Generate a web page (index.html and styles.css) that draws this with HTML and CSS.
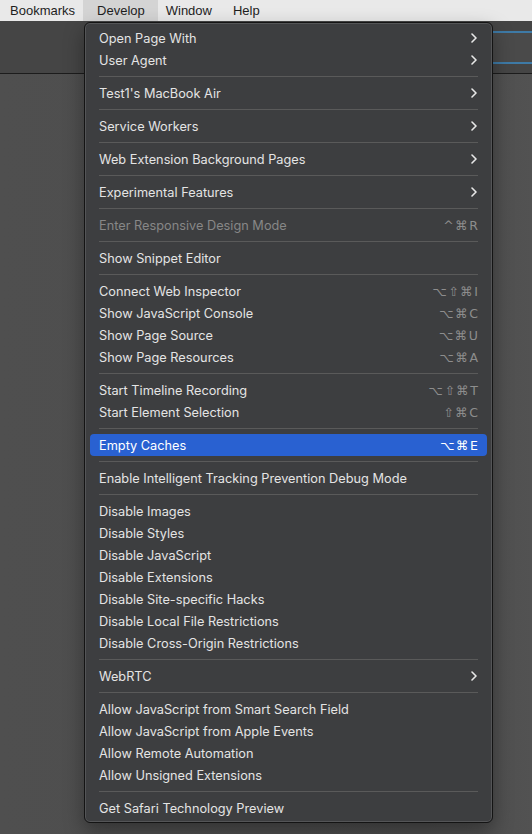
FILE: index.html
```html
<!DOCTYPE html>
<html lang="en">

<head>
  <meta charset="UTF-8" />
  <title>Develop menu</title>
  <link rel="stylesheet" href="styles.css">
</head>

<body>

  <div class="menubar">
    <span class="menubar-item">Bookmarks</span>
    <span class="menubar-item open">Develop</span>
    <span class="menubar-item">Window</span>
    <span class="menubar-item">Help</span>
  </div>

  <div class="window">
    <div class="toolbar">
      <div class="tab-strip"></div>
    </div>
    <div class="content"></div>

    <!-- Develop dropdown -->
    <div class="dropdown">
      <div class="item"><span class="label">Open Page With</span><svg class="chevron" viewBox="0 0 6 10"><polyline points="1,1 5,5 1,9" /></svg></div>
      <div class="item"><span class="label">User Agent</span><svg class="chevron" viewBox="0 0 6 10"><polyline points="1,1 5,5 1,9" /></svg></div>
      <div class="separator"></div>
      <div class="item"><span class="label">Test1's MacBook Air</span><svg class="chevron" viewBox="0 0 6 10"><polyline points="1,1 5,5 1,9" /></svg></div>
      <div class="separator"></div>
      <div class="item"><span class="label">Service Workers</span><svg class="chevron" viewBox="0 0 6 10"><polyline points="1,1 5,5 1,9" /></svg></div>
      <div class="separator"></div>
      <div class="item"><span class="label">Web Extension Background Pages</span><svg class="chevron" viewBox="0 0 6 10"><polyline points="1,1 5,5 1,9" /></svg></div>
      <div class="separator"></div>
      <div class="item"><span class="label">Experimental Features</span><svg class="chevron" viewBox="0 0 6 10"><polyline points="1,1 5,5 1,9" /></svg></div>
      <div class="separator"></div>
      <div class="item disabled"><span class="label">Enter Responsive Design Mode</span><span class="shortcut">^⌘R</span></div>
      <div class="separator"></div>
      <div class="item"><span class="label">Show Snippet Editor</span></div>
      <div class="separator"></div>
      <div class="item"><span class="label">Connect Web Inspector</span><span class="shortcut">⌥⇧⌘I</span></div>
      <div class="item"><span class="label">Show JavaScript Console</span><span class="shortcut">⌥⌘C</span></div>
      <div class="item"><span class="label">Show Page Source</span><span class="shortcut">⌥⌘U</span></div>
      <div class="item"><span class="label">Show Page Resources</span><span class="shortcut">⌥⌘A</span></div>
      <div class="separator"></div>
      <div class="item"><span class="label">Start Timeline Recording</span><span class="shortcut">⌥⇧⌘T</span></div>
      <div class="item"><span class="label">Start Element Selection</span><span class="shortcut">⇧⌘C</span></div>
      <div class="separator"></div>
      <div class="item selected"><span class="label">Empty Caches</span><span class="shortcut">⌥⌘E</span></div>
      <div class="separator"></div>
      <div class="item"><span class="label">Enable Intelligent Tracking Prevention Debug Mode</span></div>
      <div class="separator"></div>
      <div class="item"><span class="label">Disable Images</span></div>
      <div class="item"><span class="label">Disable Styles</span></div>
      <div class="item"><span class="label">Disable JavaScript</span></div>
      <div class="item"><span class="label">Disable Extensions</span></div>
      <div class="item"><span class="label">Disable Site-specific Hacks</span></div>
      <div class="item"><span class="label">Disable Local File Restrictions</span></div>
      <div class="item"><span class="label">Disable Cross-Origin Restrictions</span></div>
      <div class="separator"></div>
      <div class="item"><span class="label">WebRTC</span><svg class="chevron" viewBox="0 0 6 10"><polyline points="1,1 5,5 1,9" /></svg></div>
      <div class="separator"></div>
      <div class="item"><span class="label">Allow JavaScript from Smart Search Field</span></div>
      <div class="item"><span class="label">Allow JavaScript from Apple Events</span></div>
      <div class="item"><span class="label">Allow Remote Automation</span></div>
      <div class="item"><span class="label">Allow Unsigned Extensions</span></div>
      <div class="separator"></div>
      <div class="item"><span class="label">Get Safari Technology Preview</span></div>
    </div>
  </div>

</body>

</html>
```

FILE: styles.css
```css
body {
  margin: 0;
  height: 834px;
  overflow: hidden;
  background: #4e4e4e;
  font-family: Inter, "Liberation Sans", "DejaVu Sans", sans-serif;
}

/* top menu bar */
.menubar {
  display: flex;
  height: 21px;
  align-items: center;
  background: #e9e9e9;
  color: #1e1e1e;
  font-family: "Liberation Sans", Arial, sans-serif;
  font-size: 13px;
}

.menubar-item {
  height: 21px;
  line-height: 21px;
  padding: 0 13px 0 8px;
}

.menubar-item:first-child {
  padding: 0 8px 0 10px;
}

.menubar-item.open {
  background: #d4d4d4;
  padding: 0 13px 0 14px;
}

/* window behind the menu */
.window {
  position: relative;
}

.toolbar {
  display: flex;
  justify-content: flex-end;
  height: 52px;
  background: #454545;
  border-bottom: 1px solid #1c1c1c;
}

.tab-strip {
  width: 120px;
  height: 29px;
  margin-top: 10px;
  border-top: 2px solid #3e7aa6;
  border-bottom: 2px solid #3e7aa6;
  background: #4a4a4a;
}

.content {
  height: 760px;
  background: linear-gradient(to right, #4f4f4f, #4c4c4c 80%, #525252);
}

/* dropdown menu */
.dropdown {
  position: absolute;
  left: 84px;
  top: 1px;
  width: 407px;
  padding: 4px 0 3px;
  background: #3d3e40;
  border: 1px solid #141414;
  border-radius: 6px;
  box-shadow: inset 0 0 0 1px rgba(255, 255, 255, 0.12), 0 8px 20px rgba(0, 0, 0, 0.35);
  color: #e4e4e4;
  font-size: 12.75px;
}

.item {
  display: flex;
  align-items: center;
  height: 22px;
  margin: 0 5px;
  padding: 0 9px;
  border-radius: 4px;
}

.item .label {
  flex: 1;
  white-space: nowrap;
}

.item.disabled {
  color: #878787;
}

.item.selected {
  background: #2961d1;
  color: #ffffff;
}

.shortcut {
  color: #8d8d8d;
  font-family: "DejaVu Sans", sans-serif;
  font-size: 12.5px;
  letter-spacing: 1.5px;
  margin-right: -1.5px;
}

.item.selected .shortcut {
  color: #ffffff;
}

.chevron {
  width: 6px;
  height: 10px;
  margin-right: 1px;
  fill: none;
  stroke: #e8e8e8;
  stroke-width: 1.6;
  stroke-linecap: round;
  stroke-linejoin: round;
}

.separator {
  height: 1px;
  margin: 5px 14px;
  background: #5a5a5a;
}
```
